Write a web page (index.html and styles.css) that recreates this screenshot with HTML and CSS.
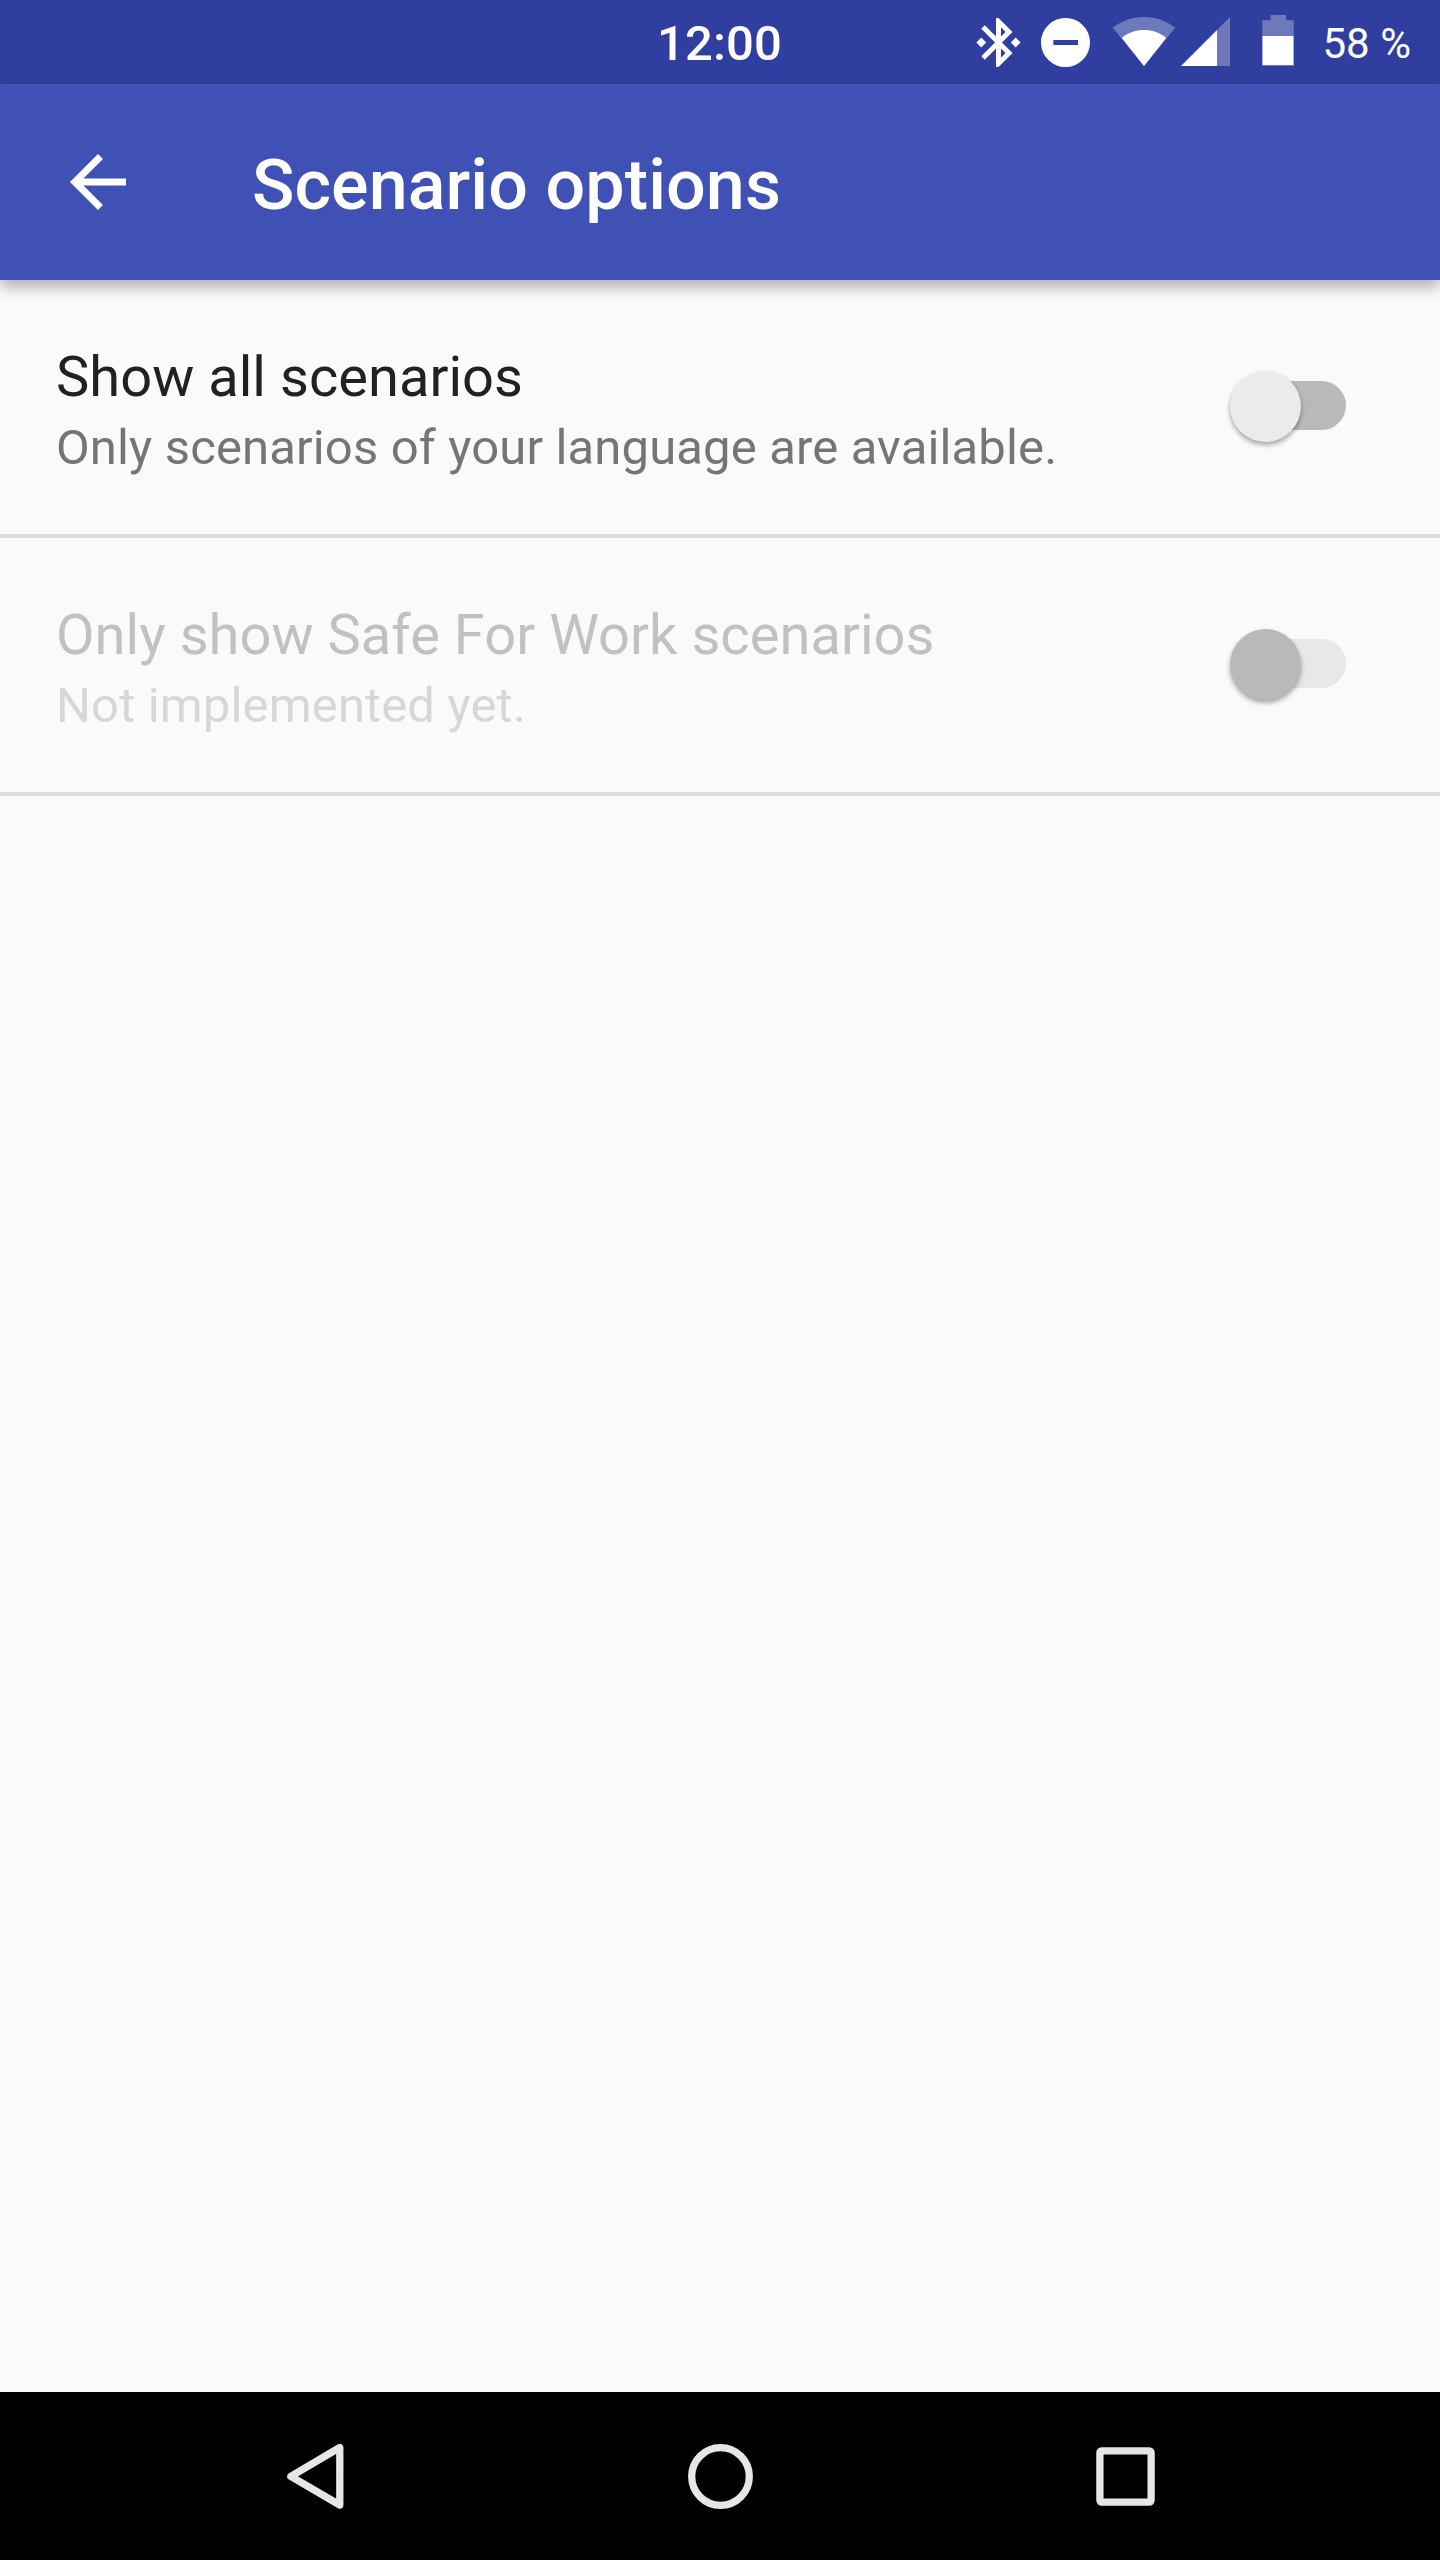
FILE: index.html
```
<!DOCTYPE html>
<html lang="en">
<head>
<meta charset="utf-8">
<title>Scenario options</title>
<link rel="stylesheet" href="styles.css">
</head>
<body>
<div class="screen">
  <div class="status-bar">
    <span class="clock">12:00</span>
    <div class="status-icons">
      <svg class="bluetooth" viewBox="0 0 24 24"><path d="M7 12l-2-2-2 2 2 2 2-2zm10.71-4.29L12 2h-1v7.59L6.41 5 5 6.41 10.59 12 5 17.59 6.41 19 11 14.41V22h1l5.71-5.71-4.3-4.29 4.3-4.29zM13 5.83l1.88 1.88L13 9.59V5.83zm1.88 10.46L13 18.17v-3.76l1.88 1.88zM19 10l-2 2 2 2 2-2-2-2z"/></svg>
      <svg class="dnd" viewBox="0 0 49 49"><path fill-rule="evenodd" d="M24.500 0a24.500 24.500 0 1 0 0 49a24.500 24.500 0 1 0 0-49zM12.300 22h24.700v5H12.300z"/></svg>
      <svg class="wifi" viewBox="0 0 64 50"><path class="faint" d="M32 49L.8 10.800C10 3.500 20.500 0 32 0s22 3.500 31.200 10.800z"/><path d="M32 49L9.800 21C16 15.500 24 13 32 13s16 2.500 22.200 8z"/></svg>
      <svg class="signal" viewBox="0 0 49 49"><path class="faint" d="M36 13L49 0v49H36z"/><path d="M0 49L36 13v36z"/></svg>
      <svg class="battery" viewBox="0 0 32 51"><path class="faint" d="M8.500 0h15.500v5.300h7.700v45.700H.3V5.300h8.200z"/><path d="M.5 21h31v29H.5z"/></svg>
    </div>
    <span class="battery-level">58 %</span>
  </div>
  <header class="app-bar">
    <svg class="back" viewBox="0 0 24 24"><path d="M20 11H7.830l5.590-5.590L12 4l-8 8 8 8 1.410-1.410L7.830 13H20v-2z"/></svg>
    <h1 class="title">Scenario options</h1>
  </header>
  <main class="options">
    <div class="option">
      <div class="label">
        <div class="name">Show all scenarios</div>
        <div class="hint">Only scenarios of your language are available.</div>
      </div>
      <div class="switch"><div class="thumb"></div></div>
    </div>
    <div class="option disabled">
      <div class="label">
        <div class="name">Only show Safe For Work scenarios</div>
        <div class="hint">Not implemented yet.</div>
      </div>
      <div class="switch"><div class="thumb"></div></div>
    </div>
  </main>
  <nav class="nav-bar">
    <svg viewBox="0 0 80 80"><path d="M64.800 11.500v57.500L15.800 40.300z"/></svg>
    <svg viewBox="0 0 80 80"><circle cx="40.500" cy="40.500" r="28.800"/></svg>
    <svg viewBox="0 0 80 80"><rect x="14.900" y="14.900" width="51.200" height="51.200" rx="1.800"/></svg>
  </nav>
</div>
</body>
</html>
```
FILE: styles.css
```
* { box-sizing: border-box; }
body { margin: 0; }
svg { display: block; flex: none; fill: #fff; }
.screen {
  display: flex;
  flex-direction: column;
  width: 1440px;
  height: 2560px;
  background: #fafafa;
  font-family: Roboto, "Liberation Sans", sans-serif;
}
.status-bar {
  display: grid;
  grid-template-columns: 969px auto 1fr;
  align-items: center;
  height: 84px;
  background: #303f9f;
  color: #fff;
}
.clock {
  padding-left: 657px;
  padding-top: 4px;
  font-size: 49px;
  font-weight: 500;
  line-height: 58px;
  letter-spacing: .15px;
}
.status-icons { display: flex; align-items: flex-start; height: 84px; }
.faint { fill: rgba(255, 255, 255, .3); }
.bluetooth { width: 59px; height: 59px; margin-top: 13px; }
.dnd { width: 49px; height: 49px; margin: 18px 0 0 13px; }
.wifi { width: 64px; height: 50px; margin: 17px 0 0 22px; }
.signal { width: 49px; height: 49px; margin: 17px 0 0 5px; }
.battery { width: 32px; height: 51px; margin: 15px 0 0 31.500px; }
.battery-level { padding: 4px 0 0 29px; font-size: 42px; line-height: 50px; }
.app-bar {
  display: flex;
  align-items: center;
  gap: 112px;
  height: 196px;
  padding-left: 56px;
  background: #3f51b5;
  color: #fff;
  box-shadow: 0 7px 14px rgba(0, 0, 0, .3);
}
.back { width: 84px; height: 84px; }
.title {
  margin: 0;
  padding-top: 6px;
  font-size: 70px;
  font-weight: 500;
  line-height: 82px;
  letter-spacing: .08px;
}
.option {
  display: flex;
  justify-content: space-between;
  height: 258px;
  padding: 64px 94px 0 56px;
  border-bottom: 4px solid #dcdcdc;
}
.name { color: #212121; font-size: 56px; line-height: 66px; letter-spacing: .04px; }
.hint { margin-top: 9px; color: #757575; font-size: 49px; line-height: 58px; letter-spacing: .14px; }
.switch {
  display: flex;
  align-items: center;
  width: 116px;
  height: 49px;
  margin-top: 37px;
  border-radius: 25px;
  background: linear-gradient(#b9b9b9, #b9b9b9) right / 80px 100% no-repeat;
}
.thumb {
  flex: none;
  width: 71px;
  height: 71px;
  margin-top: 1px;
  border-radius: 50%;
  background: #ebebeb;
  box-shadow: 0 3px 5px rgba(0, 0, 0, .35);
}
.disabled .name { color: #c1c1c1; }
.disabled .hint { color: #d7d7d7; }
.disabled .switch { background-image: linear-gradient(#e8e8e8, #e8e8e8); }
.disabled .thumb { background: #b9b9b9; }
.nav-bar {
  display: flex;
  justify-content: center;
  align-items: center;
  gap: 325px;
  height: 168px;
  margin-top: auto;
  background: #000;
}
.nav-bar svg { width: 80px; height: 80px; fill: none; stroke: #e6e6e6; stroke-width: 7.300px; stroke-linejoin: round; }
```
